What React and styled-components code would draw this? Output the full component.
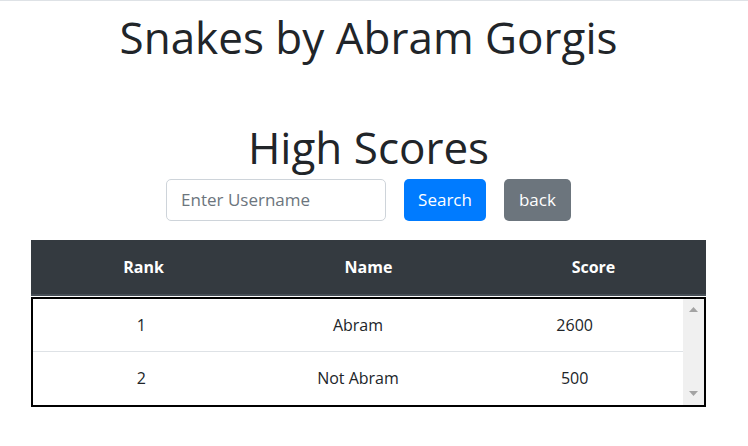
import React from "react";
import styled, { createGlobalStyle } from "styled-components";

const GlobalStyle = createGlobalStyle`
  html, body { margin: 0; padding: 0; background: #fff; }
  body {
    font-family: "Open Sans", "Noto Sans", "Liberation Sans", sans-serif;
    color: #212529;
  }
  * { box-sizing: border-box; }
`;

const Page = styled.div`
  border-top: 1px solid #dee2e6;
  padding-right: 11px;
  min-height: 445px;
`;

const Title = styled.h1`
  text-align: center;
  font-size: ${(p) => p.$size}px;
  line-height: 1.2;
  font-weight: 500;
  margin: ${(p) => p.$top}px 0 0;
`;

const SearchRow = styled.form`
  display: flex;
  justify-content: center;
  gap: 18px;
  margin-top: 5px;
`;

const Input = styled.input`
  width: 220px;
  height: 42px;
  padding: 0 14px;
  border: 1px solid #ced4da;
  border-radius: 5px;
  font-family: inherit;
  font-size: 17px;
  color: #495057;
  outline: none;
  &::placeholder { color: #6c757d; }
`;

const Button = styled.button`
  height: 42px;
  padding: 0 ${(p) => (p.$variant === "secondary" ? 15 : 14)}px;
  border: none;
  border-radius: 5px;
  font-family: inherit;
  font-size: 17px;
  color: #fff;
  background: ${(p) => (p.$variant === "secondary" ? "#6c757d" : "#007bff")};
  cursor: pointer;
`;

const Table = styled.div`
  margin: 19px 31px 0;
`;

const HeaderRow = styled.div`
  display: grid;
  grid-template-columns: repeat(3, 1fr);
  align-items: center;
  height: 56px;
  background: #343a40;
  border-bottom: 2px solid #454d55;
  color: #fff;
  font-weight: 700;
  font-size: 16px;
  text-align: center;
`;

const Body = styled.div`
  display: flex;
  margin-top: 1px;
  border: 2px solid #000;
  height: 110px;
  overflow: hidden;
`;

const Rows = styled.div`
  flex: 1;
`;

const Row = styled.div`
  display: grid;
  grid-template-columns: repeat(3, 1fr);
  align-items: center;
  height: ${(p) => (p.$last ? 52 : 53)}px;
  border-bottom: ${(p) => (p.$last ? "none" : "1px solid #dee2e6")};
  text-align: center;
  font-size: 16px;
`;

const ScrollTrack = styled.div`
  width: 21px;
  background: #f0f0f0;
  display: flex;
  flex-direction: column;
  justify-content: space-between;
  align-items: center;
  padding: 8px 0 9px;
`;

const Arrow = ({ down }) => (
  <svg width="9" height="5" viewBox="0 0 9 5">
    <polygon
      points={down ? "0,0 9,0 4.5,5" : "4.5,0 9,5 0,5"}
      fill="#a3a3a3"
    />
  </svg>
);

const scores = [
  { rank: 1, name: "Abram", score: 2600 },
  { rank: 2, name: "Not Abram", score: 500 },
];

export default function App() {
  return (
    <>
      <GlobalStyle />
      <Page>
        <Title $size={44} $top={10}>Snakes by Abram Gorgis</Title>
        <Title $size={44} $top={57}>High Scores</Title>
        <SearchRow onSubmit={(e) => e.preventDefault()}>
          <Input placeholder="Enter Username" />
          <Button type="submit">Search</Button>
          <Button type="button" $variant="secondary">back</Button>
        </SearchRow>
        <Table>
          <HeaderRow>
            <span>Rank</span>
            <span>Name</span>
            <span>Score</span>
          </HeaderRow>
          <Body>
            <Rows>
              {scores.map((s, i) => (
                <Row key={s.rank} $last={i === scores.length - 1}>
                  <span>{s.rank}</span>
                  <span>{s.name}</span>
                  <span>{s.score}</span>
                </Row>
              ))}
            </Rows>
            <ScrollTrack>
              <Arrow />
              <Arrow down />
            </ScrollTrack>
          </Body>
        </Table>
      </Page>
    </>
  );
}
